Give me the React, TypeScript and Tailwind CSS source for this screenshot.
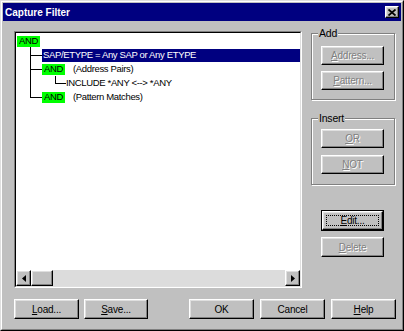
import React from 'react'

const bevel =
  'border border-t-white border-l-white border-r-black border-b-black bg-[#c0c0c0] shadow-[inset_-1px_-1px_0_#808080,inset_1px_1px_0_#dfdfdf]'

function Btn({
  children,
  className,
  disabled,
}: {
  children: React.ReactNode
  className: string
  disabled?: boolean
}) {
  return (
    <div
      className={`${bevel} ${className} flex items-center justify-center ${
        disabled ? 'text-[#808080] [text-shadow:1px_1px_0_#fff]' : 'text-black'
      }`}
    >
      {children}
    </div>
  )
}

function U({ children }: { children: React.ReactNode }) {
  return <span className="underline underline-offset-1">{children}</span>
}

function And() {
  return (
    <span className="inline-flex h-[11px] w-[23px] items-center justify-center bg-[#00ff00] text-black leading-none">
      AND
    </span>
  )
}

function GroupBox({ label, children, className }: { label: string; children: React.ReactNode; className: string }) {
  return (
    <div
      className={`relative border border-[#808080] shadow-[inset_1px_1px_0_#fff,1px_1px_0_#fff] ${className}`}
    >
      <span className="absolute -top-[7px] left-[6px] bg-[#c0c0c0] px-[1px] leading-[12px] text-[10.5px] text-black">
        {label}
      </span>
      {children}
    </div>
  )
}

export default function App() {
  return (
    <div className="w-[404px] h-[331px] font-['Liberation_Sans',Arial,sans-serif] text-[10px] tracking-[-0.2px] select-none">
      <div className="h-full border border-t-[#dfdfdf] border-l-[#dfdfdf] border-r-black border-b-black">
        <div className="h-full flex flex-col border border-t-white border-l-white border-r-[#808080] border-b-[#808080] bg-[#c0c0c0] p-[1px]">
          {/* title bar */}
          <div className="h-[18px] flex items-center justify-between bg-[#000080] pl-[2px] pr-[2px]">
            <span className="text-white font-bold text-[10px] tracking-normal">Capture Filter</span>
            <div className={`${bevel} w-[14px] h-[12px] flex items-center justify-center`}>
              <svg width="8" height="7" viewBox="0 0 8 7">
                <path d="M0.5 0.5 L7.5 6.5 M7.5 0.5 L0.5 6.5" stroke="black" strokeWidth="1.8" />
              </svg>
            </div>
          </div>

          <div className="flex pl-[11px] pt-[10px]">
            {/* tree list */}
            <div className="w-[288px] h-[257px] border border-t-[#808080] border-l-[#808080] border-b-white border-r-white">
              <div className="h-full flex flex-col border border-t-black border-l-black border-b-[#dfdfdf] border-r-[#dfdfdf]">
                <div className="relative flex-1 bg-white pt-[1px] text-[9.5px] tracking-[-0.35px]">
                  <svg className="absolute left-0 top-0" width="60" height="70">
                    <path
                      d="M14.5 14 V64.5 M14 22.5 H26 M14 36.5 H26 M14 64.5 H26 M39.5 43 V50.5 M39 50.5 H50"
                      stroke="black"
                      strokeWidth="1"
                      fill="none"
                    />
                  </svg>
                  <div className="h-[14px] flex items-center pl-[1px]">
                    <And />
                  </div>
                  <div className="h-[14px] flex items-center pl-[26px]">
                    <div className="flex-1 h-[13px] flex items-center bg-[#000080] text-white pl-[1px]">
                      SAP/ETYPE = Any SAP or Any ETYPE
                    </div>
                  </div>
                  <div className="h-[14px] flex items-center pl-[26px]">
                    <And />
                    <span className="ml-[8px] text-black">(Address Pairs)</span>
                  </div>
                  <div className="h-[14px] flex items-center pl-[50px] text-black">
                    INCLUDE *ANY &lt;--&gt; *ANY
                  </div>
                  <div className="h-[14px] flex items-center pl-[26px]">
                    <And />
                    <span className="ml-[8px] text-black">(Pattern Matches)</span>
                  </div>
                </div>
                {/* horizontal scrollbar */}
                <div className="h-[16px] flex bg-[#dcdcdc]">
                  <div className={`${bevel} w-[15px] h-full flex items-center justify-center`}>
                    <svg width="4" height="7" viewBox="0 0 4 7">
                      <path d="M4 0 L0 3.5 L4 7 Z" fill="black" />
                    </svg>
                  </div>
                  <div className={`${bevel} w-[22px] h-full`} />
                  <div className="flex-1" />
                  <div className={`${bevel} w-[15px] h-full flex items-center justify-center`}>
                    <svg width="4" height="7" viewBox="0 0 4 7">
                      <path d="M0 0 L4 3.5 L0 7 Z" fill="black" />
                    </svg>
                  </div>
                </div>
              </div>
            </div>

            {/* right column */}
            <div className="ml-[9px] w-[84px] pt-[2px] flex flex-col">
              <GroupBox label="Add" className="h-[67px] pt-[12px] pl-[9px] flex flex-col gap-[6px]">
                <Btn disabled className="w-[63px] h-[19px]">
                  <span>
                    <U>A</U>ddress...
                  </span>
                </Btn>
                <Btn disabled className="w-[63px] h-[19px]">
                  <span>
                    <U>P</U>attern...
                  </span>
                </Btn>
              </GroupBox>
              <GroupBox label="Insert" className="mt-[18px] h-[67px] pt-[10px] pl-[9px] flex flex-col gap-[7px]">
                <Btn disabled className="w-[63px] h-[19px]">
                  <span>
                    <U>O</U>R
                  </span>
                </Btn>
                <Btn disabled className="w-[63px] h-[19px]">
                  <span>
                    <U>N</U>OT
                  </span>
                </Btn>
              </GroupBox>
              <div className="mt-[25px] ml-[10px] w-[63px] h-[21px] border border-black">
                <div className={`${bevel} h-full p-[3px]`}>
                  <div className="h-full border border-dotted border-black flex items-center justify-center text-black">
                    <span>
                      <U>E</U>dit...
                    </span>
                  </div>
                </div>
              </div>
              <Btn disabled className="mt-[6px] ml-[10px] w-[63px] h-[20px]">
                <span>
                  <U>D</U>elete
                </span>
              </Btn>
            </div>
          </div>

          {/* bottom buttons */}
          <div className="flex pl-[11px] pt-[11px]">
            <Btn className="w-[65px] h-[20px]">
              <span>
                <U>L</U>oad...
              </span>
            </Btn>
            <Btn className="ml-[5px] w-[64px] h-[20px]">
              <span>
                <U>S</U>ave...
              </span>
            </Btn>
            <Btn className="ml-[41px] w-[65px] h-[20px]">OK</Btn>
            <Btn className="ml-[6px] w-[65px] h-[20px]">Cancel</Btn>
            <Btn className="ml-[6px] w-[65px] h-[20px]">
              <span>
                <U>H</U>elp
              </span>
            </Btn>
          </div>
        </div>
      </div>
    </div>
  )
}
